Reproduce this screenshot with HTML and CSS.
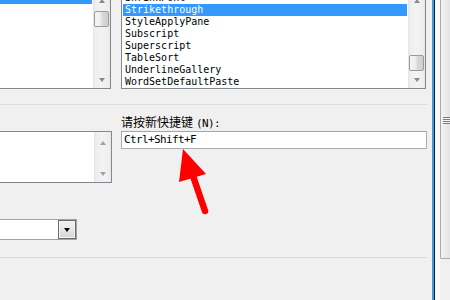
FILE: index.html
```html
<!DOCTYPE html>
<html lang="zh-CN">
<head>
<meta charset="utf-8">
<title>自定义键盘</title>
<link rel="stylesheet" href="styles.css">
</head>
<body>
<div class="screen">
  <div class="dialog">
    <div class="lists">
      <div class="listbox listbox-cats">
        <ul class="items">
          <li class="item selected">&nbsp;</li>
        </ul>
        <div class="vscroll">
          <div class="sbtn"><span class="arr arr-up"></span></div>
          <div class="track"><div class="thumb thumb-top"></div></div>
          <div class="sbtn"><span class="arr arr-down"></span></div>
        </div>
      </div>
      <div class="listbox listbox-cmds">
        <ul class="items">
          <li class="item">ShrinkFont</li>
          <li class="item selected">Strikethrough</li>
          <li class="item">StyleApplyPane</li>
          <li class="item">Subscript</li>
          <li class="item">Superscript</li>
          <li class="item">TableSort</li>
          <li class="item">UnderlineGallery</li>
          <li class="item">WordSetDefaultPaste</li>
        </ul>
        <div class="vscroll">
          <div class="sbtn"><span class="arr arr-up"></span></div>
          <div class="track track-end"><div class="thumb"></div></div>
          <div class="sbtn"><span class="arr arr-down"></span></div>
        </div>
      </div>
    </div>

    <div class="sep"></div>

    <div class="keys">
      <div class="label">请按新快捷键<span class="acc">(N):</span></div>
      <div class="curkeys">
        <div class="curkeys-list"></div>
        <div class="vscroll">
          <div class="sbtn"><span class="arr arr-up"></span></div>
          <div class="track"></div>
          <div class="sbtn"><span class="arr arr-down"></span></div>
        </div>
      </div>
      <div class="newkey">Ctrl+Shift+F</div>
    </div>

    <div class="combo">
      <div class="combo-text"></div>
      <div class="combo-btn"><span class="combo-arr"></span></div>
    </div>

    <div class="sep sep-bottom"></div>
  </div>

  <div class="edge">
    <div class="edge-blue"></div>
    <div class="edge-dark"></div>
    <div class="edge-gap"></div>
    <div class="edge-sb">
      <div class="edge-thumb"><div class="grip"></div></div>
      <div class="edge-track"></div>
    </div>
  </div>
</div>

<svg class="callout" width="450" height="300" viewBox="0 0 450 300" aria-hidden="true">
  <polygon points="183,149 179,182 206,174" fill="#ff0000"/>
  <line x1="193" y1="176" x2="205" y2="211" stroke="#ff0000" stroke-width="6.5" stroke-linecap="round"/>
</svg>
</body>
</html>
```

FILE: styles.css
```css
html, body {
  margin: 0;
  padding: 0;
}

body {
  background: #f0f0f0;
  width: 450px;
  height: 300px;
  overflow: hidden;
  position: relative;
  font-family: "DejaVu Sans Mono", "Noto Sans CJK SC", monospace;
  color: #000;
}

.screen {
  display: flex;
  width: 450px;
  height: 300px;
  overflow: hidden;
}

.dialog {
  width: 432px;
  flex: none;
}

/* ---------- top lists ---------- */
.lists {
  display: flex;
  align-items: flex-end;
  height: 89px;
}

.listbox {
  display: flex;
  height: 98px;
  box-sizing: border-box;
  border: 1px solid #828790;
  background: #fff;
  flex: none;
}

.listbox-cats {
  width: 200px;
  margin-left: -89px;
}

.listbox-cmds {
  width: 305px;
  margin-left: 10px;
}

.items {
  flex: 1;
  margin: 0;
  padding: 0;
  list-style: none;
  overflow: hidden;
}

.item {
  height: 12px;
  line-height: 12px;
  margin: 0 1px;
  padding-left: 2px;
  font-size: 10px;
  white-space: nowrap;
}

.item.selected {
  background: #3399ff;
  color: #fff;
}

/* ---------- scrollbars ---------- */
.vscroll {
  width: 17px;
  flex: none;
  display: flex;
  flex-direction: column;
  background: linear-gradient(to right, #e3e3e3 0, #eeeeee 2px, #f3f3f3 50%, #eeeeee 15px, #e6e6e6 100%);
}

.sbtn {
  height: 17px;
  flex: none;
  display: flex;
  align-items: center;
  justify-content: center;
}

.track {
  flex: 1;
  display: flex;
  flex-direction: column;
}

.track-end {
  justify-content: flex-end;
}

.thumb {
  height: 16px;
  margin: 0 1px;
  box-sizing: border-box;
  border: 1px solid #9b9b9b;
  border-radius: 2px;
  background: linear-gradient(to right, #f7f7f7 0, #ececec 45%, #d9d9d9 55%, #cfcfcf 100%);
}

.thumb-top {
  margin-top: 2px;
}

.arr {
  width: 0;
  height: 0;
  border-left: 3.5px solid transparent;
  border-right: 3.5px solid transparent;
}

.arr-up {
  border-bottom: 4px solid #8a8a8a;
}

.arr-down {
  border-top: 4px solid #8a8a8a;
}

/* ---------- separators ---------- */
.sep {
  width: 427px;
  height: 1px;
  background: #d5dde3;
  margin-top: 15px;
}

.sep-bottom {
  margin-top: 17px;
}

/* ---------- keys area ---------- */
.keys {
  display: grid;
  grid-template-columns: 112px 306px;
  column-gap: 9px;
  align-items: start;
}

.label {
  grid-column: 2;
  grid-row: 1;
  padding-top: 10px;
  margin-bottom: 2px;
  height: 14px;
  line-height: 14px;
  font-family: "Noto Sans CJK SC", sans-serif;
  font-size: 12px;
  white-space: nowrap;
}

.acc {
  font-family: "DejaVu Sans Mono", monospace;
  font-size: 11px;
  letter-spacing: -0.6px;
  margin-left: 3px;
}

.curkeys {
  grid-column: 1;
  grid-row: 2;
  justify-self: end;
  width: 200px;
  height: 52px;
  box-sizing: border-box;
  border: 1px solid #828790;
  background: #fff;
  display: flex;
}

.curkeys-list {
  flex: 1;
}

.curkeys .arr-up,
.curkeys .arr-down {
  border-top-color: #a2a2a2;
  border-bottom-color: #a2a2a2;
}

.curkeys .arr-up {
  margin-top: 4px;
}

.newkey {
  grid-column: 2;
  grid-row: 2;
  height: 18px;
  box-sizing: border-box;
  border: 1px solid #abadb3;
  border-top-color: #a3a5ab;
  background: #fff;
  padding-left: 2px;
  line-height: 16px;
  font-size: 11px;
  letter-spacing: -0.62px;
}

/* ---------- combo ---------- */
.combo {
  display: flex;
  width: 161px;
  height: 21px;
  margin-left: -84px;
  margin-top: 36px;
  box-sizing: border-box;
  border: 1px solid #a4a4a4;
  background: #fff;
}

.combo-text {
  flex: 1;
}

.combo-btn {
  width: 18px;
  flex: none;
  box-sizing: border-box;
  border: 1px solid #6b6b6b;
  box-shadow: inset 0 0 0 1px #f4f4f4;
  background: linear-gradient(to bottom, #f2f2f2 0, #e6e6e6 50%, #d4d4d4 100%);
  display: flex;
  align-items: center;
  justify-content: center;
}

.combo-arr {
  width: 0;
  height: 0;
  border-left: 3.5px solid transparent;
  border-right: 3.5px solid transparent;
  border-top: 4px solid #000;
  margin-top: 1px;
}

/* ---------- right window edge ---------- */
.edge {
  display: flex;
  flex: 1;
  height: 300px;
}

.edge-blue {
  width: 2px;
  background: #3a9fdd;
}

.edge-dark {
  width: 1px;
  background: #1a1a1a;
}

.edge-gap {
  width: 5px;
  background: #f8f8f8;
}

.edge-sb {
  flex: 1;
  display: flex;
  flex-direction: column;
}

.edge-thumb {
  height: 259px;
  box-sizing: border-box;
  border-left: 1px solid #a8a8a8;
  border-bottom: 1px solid #a8a8a8;
  border-bottom-left-radius: 2px;
  background: linear-gradient(to right, #f3f3f3, #e4e4e4);
  padding-top: 117px;
}

.grip {
  height: 7px;
  margin-left: 2px;
  background: repeating-linear-gradient(to bottom, #7d7d7d 0, #7d7d7d 1px, #f4f4f4 1px, #f4f4f4 2px);
}

.edge-track {
  flex: 1;
  background: #f0f0f0;
}

/* ---------- annotation arrow ---------- */
.callout {
  position: absolute;
  left: 0;
  top: 0;
  pointer-events: none;
}
```
